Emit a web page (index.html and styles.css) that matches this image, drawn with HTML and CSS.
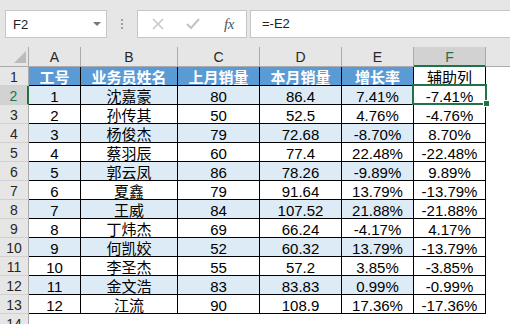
FILE: index.html
```html
<!DOCTYPE html>
<html lang="zh">
<head>
<meta charset="utf-8">
<link rel="stylesheet" href="styles.css">
</head>
<body>
<div class="app">
  <div class="toolbar">
    <div class="namebox">
      <span class="name">F2</span>
      <svg class="caret" width="8" height="5" viewBox="0 0 8 5"><polygon points="0,0 8,0 4,4" fill="#777"/></svg>
    </div>
    <div class="dots"><i></i><i></i><i></i></div>
    <div class="fxbox">
      <svg class="ico" width="12" height="12" viewBox="0 0 12 12"><path d="M1 1L11 11M11 1L1 11" stroke="#c3c3c3" stroke-width="1.4" fill="none"/></svg>
      <svg class="ico" width="14" height="12" viewBox="0 0 14 12"><path d="M1 6L5 10L13 1" stroke="#c3c3c3" stroke-width="2" fill="none"/></svg>
      <span class="fx">fx</span>
    </div>
    <div class="formula">=-E2</div>
  </div>
  <div class="sheet">
    <div class="corner"><svg width="12" height="12" viewBox="0 0 12 12"><polygon points="12,0 12,12 0,12" fill="#bcbcbc"/></svg></div>
    <div class="ch">A</div><div class="ch">B</div><div class="ch">C</div><div class="ch">D</div><div class="ch">E</div><div class="ch sel">F</div><div class="ch last"></div>

    <div class="rh">1</div>
    <div class="th">工号</div><div class="th">业务员姓名</div><div class="th">上月销量</div><div class="th">本月销量</div><div class="th">增长率</div><div class="td">辅助列</div><div class="e"></div>

    <div class="rh sel">2</div>
    <div class="td alt">1</div><div class="td alt">沈嘉豪</div><div class="td alt">80</div><div class="td alt">86.4</div><div class="td alt">7.41%</div><div class="td active">-7.41%<span class="selbox"></span><span class="handle"></span></div><div class="e"></div>

    <div class="rh">3</div>
    <div class="td">2</div><div class="td">孙传其</div><div class="td">50</div><div class="td">52.5</div><div class="td">4.76%</div><div class="td">-4.76%</div><div class="e"></div>

    <div class="rh">4</div>
    <div class="td alt">3</div><div class="td alt">杨俊杰</div><div class="td alt">79</div><div class="td alt">72.68</div><div class="td alt">-8.70%</div><div class="td">8.70%</div><div class="e"></div>

    <div class="rh">5</div>
    <div class="td">4</div><div class="td">蔡羽辰</div><div class="td">60</div><div class="td">77.4</div><div class="td">22.48%</div><div class="td">-22.48%</div><div class="e"></div>

    <div class="rh">6</div>
    <div class="td alt">5</div><div class="td alt">郭云凤</div><div class="td alt">86</div><div class="td alt">78.26</div><div class="td alt">-9.89%</div><div class="td">9.89%</div><div class="e"></div>

    <div class="rh">7</div>
    <div class="td">6</div><div class="td">夏鑫</div><div class="td">79</div><div class="td">91.64</div><div class="td">13.79%</div><div class="td">-13.79%</div><div class="e"></div>

    <div class="rh">8</div>
    <div class="td alt">7</div><div class="td alt">王威</div><div class="td alt">84</div><div class="td alt">107.52</div><div class="td alt">21.88%</div><div class="td">-21.88%</div><div class="e"></div>

    <div class="rh">9</div>
    <div class="td">8</div><div class="td">丁炜杰</div><div class="td">69</div><div class="td">66.24</div><div class="td">-4.17%</div><div class="td">4.17%</div><div class="e"></div>

    <div class="rh">10</div>
    <div class="td alt">9</div><div class="td alt">何凯姣</div><div class="td alt">52</div><div class="td alt">60.32</div><div class="td alt">13.79%</div><div class="td">-13.79%</div><div class="e"></div>

    <div class="rh">11</div>
    <div class="td">10</div><div class="td">李圣杰</div><div class="td">55</div><div class="td">57.2</div><div class="td">3.85%</div><div class="td">-3.85%</div><div class="e"></div>

    <div class="rh">12</div>
    <div class="td alt">11</div><div class="td alt">金文浩</div><div class="td alt">83</div><div class="td alt">83.83</div><div class="td alt">0.99%</div><div class="td">-0.99%</div><div class="e"></div>

    <div class="rh">13</div>
    <div class="td">12</div><div class="td">江流</div><div class="td">90</div><div class="td">108.9</div><div class="td">17.36%</div><div class="td">-17.36%</div><div class="e"></div>

    <div class="rh">14</div>
    <div class="e"></div><div class="e"></div><div class="e"></div><div class="e"></div><div class="e"></div><div class="e"></div><div class="e"></div>
  </div>
</div>
</body>
</html>
```

FILE: styles.css
```css
* { box-sizing: border-box; }
html, body { margin: 0; padding: 0; }
body {
  width: 510px;
  height: 324px;
  overflow: hidden;
  background: #fff;
  font-family: "Liberation Sans", "Noto Sans CJK SC", sans-serif;
  color: #000;
}
.app { display: flex; flex-direction: column; }

.toolbar {
  height: 47px;
  background: #e6e6e6;
  display: flex;
  align-items: flex-start;
  padding-top: 10px;
}
.namebox {
  margin-left: 5px;
  width: 102px;
  height: 28px;
  background: #fff;
  border: 1px solid #c6c6c6;
  display: flex;
  align-items: center;
  justify-content: space-between;
  padding: 0 5px 0 7px;
}
.name { font-size: 13px; color: #222; }
.caret { display: block; }
.dots {
  width: 30px;
  height: 28px;
  display: flex;
  flex-direction: column;
  align-items: center;
  justify-content: center;
  gap: 2px;
}
.dots i { display: block; width: 2px; height: 2px; background: #a0a0a0; }
.fxbox {
  width: 110px;
  height: 28px;
  background: #fff;
  border: 1px solid #c6c6c6;
  display: flex;
  align-items: center;
  padding-left: 14px;
  gap: 0;
}
.fxbox .ico { display: block; }
.fxbox .ico:first-child { margin-right: 22px; }
.fxbox .ico:nth-child(2) { margin-right: 24px; }
.fx {
  font-family: "Liberation Serif", serif;
  font-style: italic;
  font-size: 15px;
  color: #555;
  letter-spacing: -0.5px;
}
.formula {
  flex: 1;
  margin-left: 3px;
  height: 28px;
  background: #fff;
  border: 1px solid #c6c6c6;
  border-right: none;
  font-size: 13px;
  line-height: 26px;
  padding-left: 11px;
  color: #222;
}

.sheet {
  display: grid;
  grid-template-columns: 29px 52px 97px 82px 82px 72px 72px 24px;
  grid-template-rows: 20px repeat(14, 19px);
}
.corner {
  background: #e6e6e6;
  border-right: 1px solid #ababab;
  border-bottom: 1px solid #ababab;
  display: flex;
  align-items: flex-end;
  justify-content: flex-end;
  padding: 0 2px 3px 0;
}
.corner svg { display: block; }
.ch {
  background: #e6e6e6;
  border-right: 1px solid #ababab;
  border-bottom: 1px solid #ababab;
  text-align: center;
  font-size: 14px;
  line-height: 21px;
  color: #262626;
}
.ch.last { border-right: none; }
.ch.sel {
  background: #d2d2d2;
  color: #217346;
  border-bottom: 2px solid #217346;
  line-height: 20px;
}
.rh {
  background: #e6e6e6;
  border-right: 1px solid #ababab;
  border-bottom: 1px solid #d0d0d0;
  text-align: center;
  font-size: 14px;
  line-height: 20px;
  color: #262626;
  overflow: hidden;
}
.rh.sel {
  background: #d2d2d2;
  color: #217346;
  border-right: 2px solid #217346;
}
.th, .td {
  border-right: 1px solid #000;
  border-bottom: 1px solid #000;
  text-align: center;
  font-size: 15px;
  line-height: 21px;
  overflow: hidden;
  white-space: nowrap;
}
.th {
  background: #5b9bd5;
  color: #fff;
  font-weight: 700;
}
.td.alt { background: #ddebf7; }
.td.active { position: relative; overflow: visible; }
.selbox {
  position: absolute;
  top: -2px;
  left: -2px;
  right: -2px;
  bottom: -1px;
  border: 2px solid #217346;
  pointer-events: none;
}
.handle {
  position: absolute;
  left: 69px;
  top: 14px;
  width: 7px;
  height: 7px;
  background: #217346;
  border: 1px solid #fff;
}
.e { background: #fff; }
```
